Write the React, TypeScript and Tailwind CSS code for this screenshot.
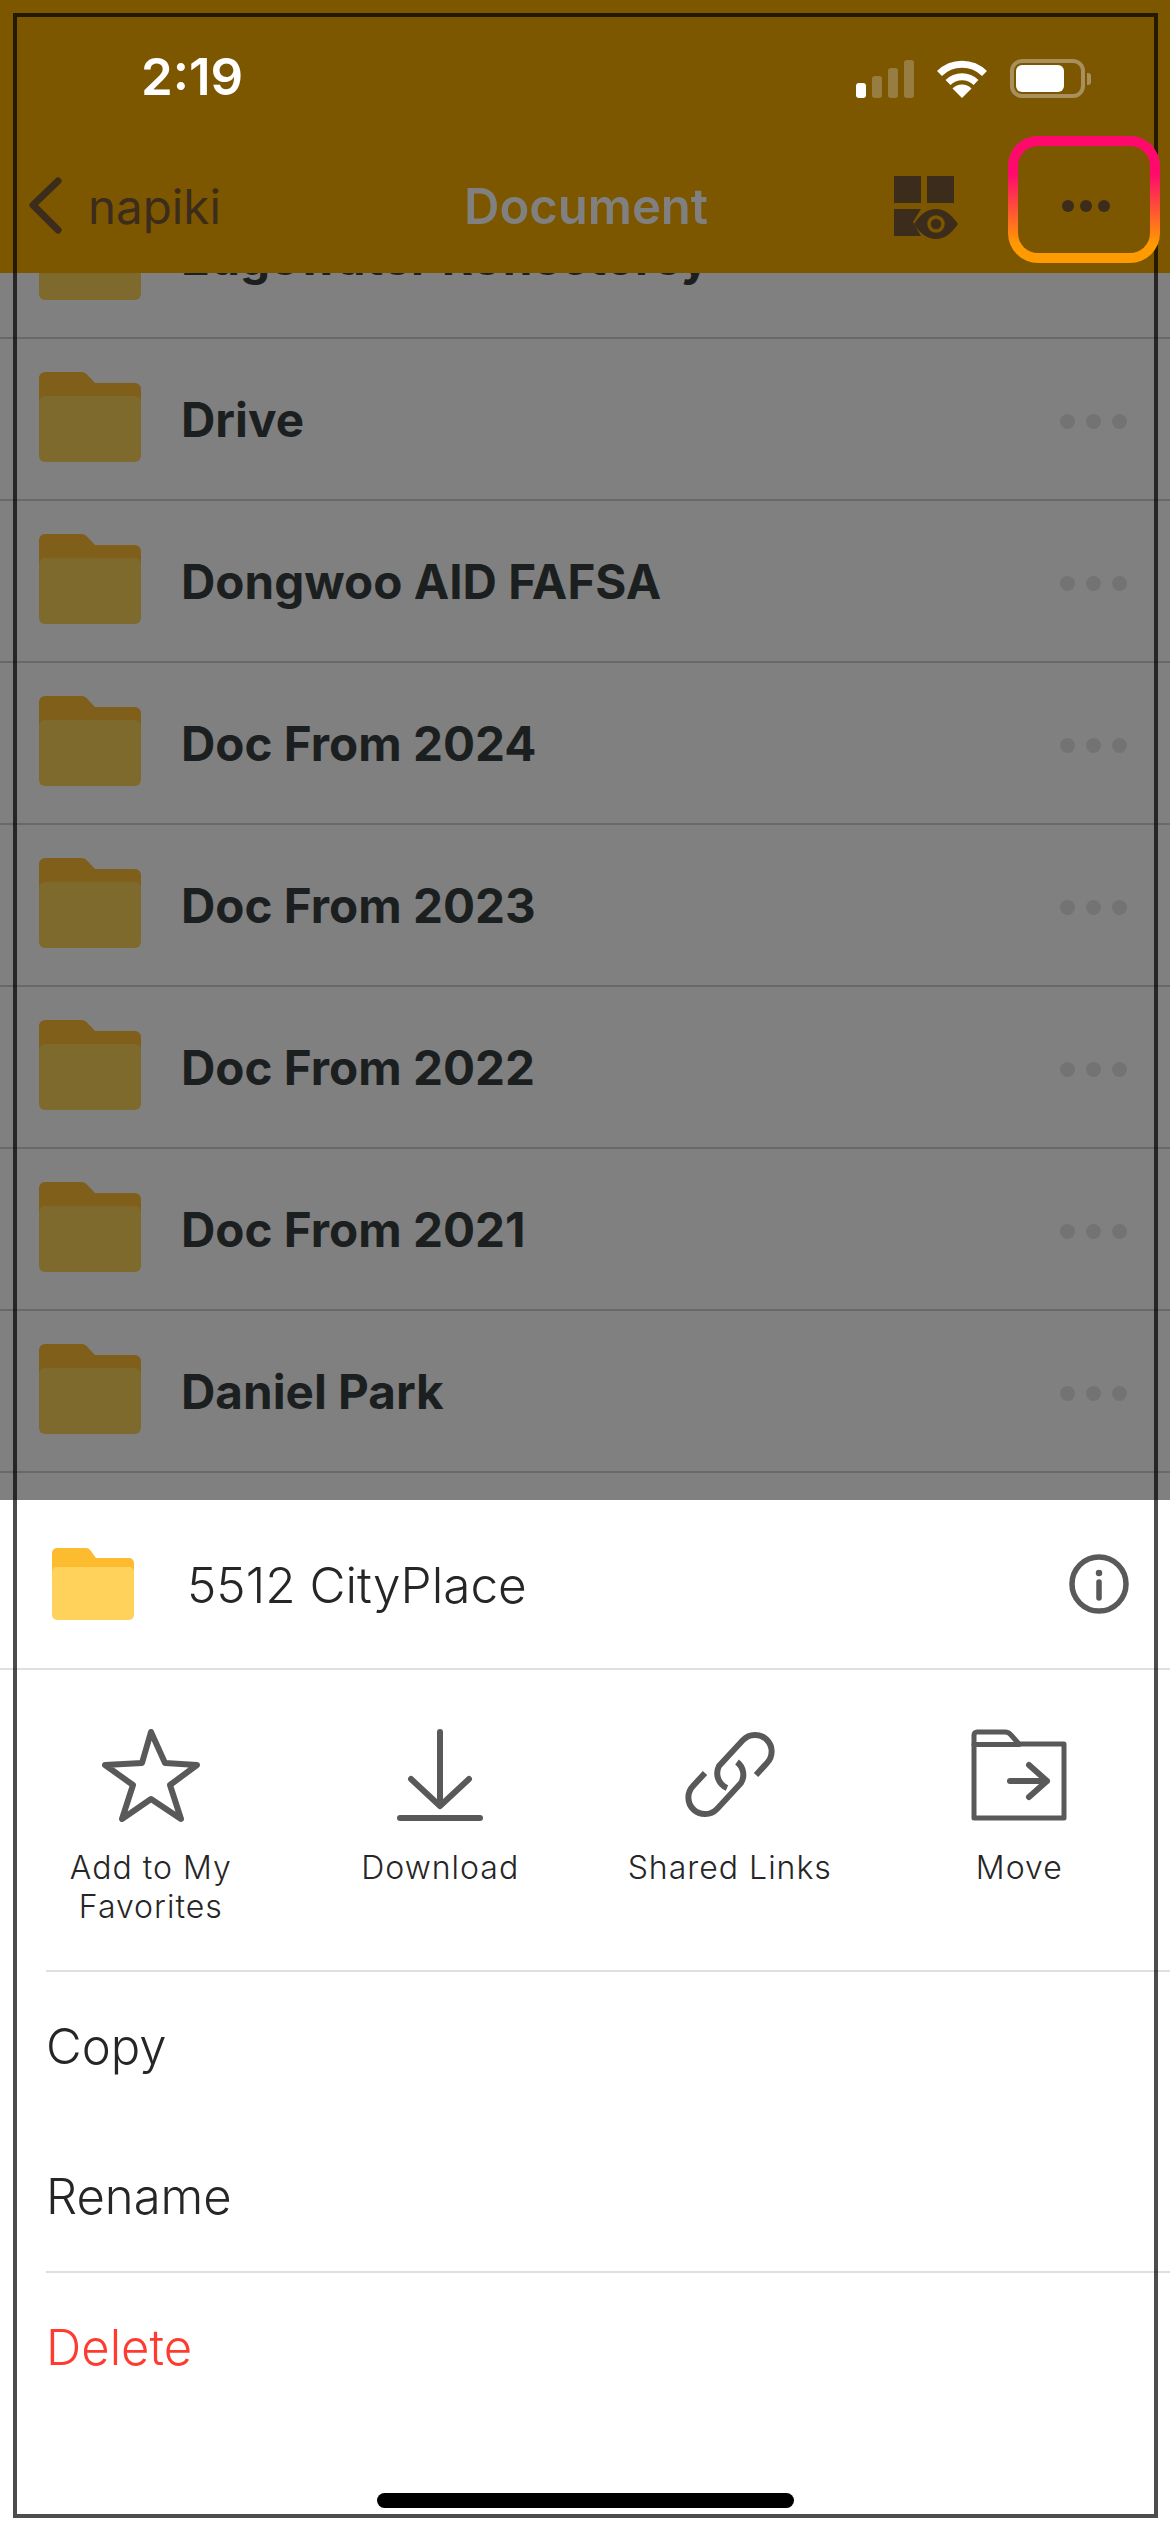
const rows = ["Edgewater Reflectorey", "Drive", "Dongwoo AID FAFSA", "Doc From 2024", "Doc From 2023", "Doc From 2022", "Doc From 2021", "Daniel Park", ""];

function FolderIcon({ back, front, className }: { back: string; front: string; className: string }) {
  return (
    <svg viewBox="0 0 102 90" className={className}>
      <path d="M0 6a6 6 0 0 1 6-6h37a6 6 0 0 1 4.2 1.8L56 11h40a6 6 0 0 1 6 6v30H0z" fill={back} />
      <rect x="0" y="24" width="102" height="66" rx="6" fill={front} />
    </svg>
  );
}

function Row({ name }: { name: string }) {
  return (
    <div className="h-[162px] shrink-0 border-b-[2px] border-[#696969] flex items-center pt-[4px] pl-[39px] pr-[43px]">
      {name && <FolderIcon back="#7f5f1a" front="#7f6a2e" className="w-[102px] h-[90px] shrink-0 -mt-[8px]" />}
      <span className="ml-[40px] flex-1 -mt-[3px] text-[47.6px] font-bold text-[#1c1f20] whitespace-nowrap">{name}</span>
      {name && (
        <div className="flex gap-[11px]">
          <span className="w-[15px] h-[15px] rounded-full bg-[#737373]" />
          <span className="w-[15px] h-[15px] rounded-full bg-[#737373]" />
          <span className="w-[15px] h-[15px] rounded-full bg-[#737373]" />
        </div>
      )}
    </div>
  );
}

function Action({ label, children }: { label: string; children: React.ReactNode }) {
  return (
    <div className="flex flex-col items-center">
      <div className="h-[96px] flex items-center justify-center">{children}</div>
      <div className="mt-[25px] text-[32px] leading-[39px] tracking-[1px] font-[350] text-[#262626] text-center w-[240px]">{label}</div>
    </div>
  );
}

export default function App() {
  return (
    <div className="relative w-[1170px] h-[2532px] overflow-hidden flex flex-col bg-white font-['Inter',sans-serif]">
      <header className="relative z-10 h-[273px] shrink-0 bg-[#7c5700] flex flex-col">
        <div className="h-[156px] flex items-start justify-between pt-[47px] pl-[141px] pr-[79px]">
          <span className="text-[51px] leading-[60px] font-semibold text-white">2:19</span>
          <div className="flex items-center gap-[23px] pt-[12px]">
            <svg width="58" height="38" viewBox="0 0 58 38">
              <rect x="0" y="23" width="10" height="15" rx="3" fill="#fff" />
              <rect x="16" y="16" width="10" height="22" rx="3" fill="#987d43" />
              <rect x="32" y="8" width="10" height="30" rx="3" fill="#987d43" />
              <rect x="48" y="0" width="10" height="38" rx="3" fill="#987d43" />
            </svg>
            <svg width="50" height="38" viewBox="0 0 50 38" fill="none" stroke="#fff" strokeWidth="7">
              <path d="M2.5 13.5a32 32 0 0 1 45 0" />
              <path d="M11 22.5a20 20 0 0 1 28 0" />
              <path d="M25 38l-9.5-9.5a13.5 13.5 0 0 1 19 0z" fill="#fff" stroke="none" />
            </svg>
            <div className="flex items-center gap-[2px]">
              <div className="w-[75px] h-[39px] rounded-[12px] border-[4px] border-[#a98f5c] p-[2px]">
                <div className="w-[48px] h-full rounded-[6px] bg-white" />
              </div>
              <div className="w-[4px] h-[12px] rounded-r-[3px] bg-[#a98f5c]" />
            </div>
          </div>
        </div>
        <div className="flex-1 relative flex items-start">
          <svg width="40" height="64" viewBox="0 0 40 64" className="ml-[25px] mt-[19px] shrink-0" fill="none" stroke="#3c2c1c" strokeWidth="7" strokeLinecap="round" strokeLinejoin="round">
            <path d="M33 6 8 30l25 25" />
          </svg>
          <span className="ml-[23px] mt-[23px] text-[47.5px] leading-[56px] text-[#3c2c1c]">napiki</span>
          <span className="absolute left-[464px] top-[23px] text-[49px] leading-[56px] font-semibold text-[#808080]">Document</span>
          <svg width="64" height="64" viewBox="0 0 64 64" className="absolute left-[894px] top-[20px]">
            <rect x="0" y="0" width="27" height="27" fill="#3c2c1c" />
            <rect x="33" y="0" width="27" height="27" fill="#3c2c1c" />
            <path d="M0 33h27l-8 13 8 14H0z" fill="#3c2c1c" />
            <path d="M20 48c6-10 14-15 22-15s15 5 22 15c-7 10-14 15-22 15s-16-5-22-15z" fill="#3c2c1c" />
            <circle cx="42" cy="48" r="7" fill="none" stroke="#7c5700" strokeWidth="3.5" />
          </svg>
        </div>
      </header>

      <main className="flex-1 min-h-0 overflow-hidden bg-[#808080]">
        <div className="flex flex-col mt-[-96px]">
          {rows.map((r, i) => (
            <Row key={i} name={r} />
          ))}
        </div>
      </main>

      <section className="h-[1032px] shrink-0 bg-white flex flex-col">
        <div className="h-[170px] border-b-[2px] border-[#e0e0e0] flex items-center pl-[52px] pr-[41px]">
          <svg viewBox="0 0 82 72" className="w-[82px] h-[72px] shrink-0">
            <path d="M0 5a5 5 0 0 1 5-5h29a5 5 0 0 1 4 1.8L44 10h33a5 5 0 0 1 5 5v25H0z" fill="#fdbb2f" />
            <rect x="0" y="19" width="82" height="53" rx="5" fill="#ffd35b" />
          </svg>
          <span className="ml-[53px] flex-1 pt-[3px] text-[49.5px] font-[350] text-[#262626]">5512 CityPlace</span>
          <svg width="60" height="60" viewBox="0 0 60 60" fill="none" stroke="#595959" strokeWidth="5.5" strokeLinecap="round">
            <circle cx="30" cy="30" r="27" />
            <path d="M30 28v16" />
            <circle cx="30" cy="19" r="2.5" fill="#595959" strokeWidth="1.5" />
          </svg>
        </div>

        <div className="h-[300px] pt-[57px] px-[6px] grid grid-cols-4 content-start">
          <Action label="Add to My Favorites">
            <svg width="98" height="94" viewBox="0 0 98 94" fill="none" stroke="#595959" strokeWidth="6" strokeLinejoin="round">
              <path d="M49 4l14 31 32 2-27 20 11 34-30-20-29 20 11-34L3 37l37-2z" />
            </svg>
          </Action>
          <Action label="Download">
            <svg width="86" height="92" viewBox="0 0 86 92" fill="none" stroke="#595959" strokeWidth="6" strokeLinecap="round" strokeLinejoin="round">
              <path d="M43 3v72" />
              <path d="M14 50l29 27 29-27" />
              <path d="M3 89h80" />
            </svg>
          </Action>
          <Action label="Shared Links">
            <svg width="90" height="92" viewBox="0 0 90 92" fill="none" stroke="#595959" strokeWidth="6">
              <path d="M20 44 8 57a16 16 0 0 0 24 23l24-26a16 16 0 0 0-4-21" />
              <path d="M71 46 82 34a16 16 0 0 0-24-23L34 37a16 16 0 0 0 8 22" />
            </svg>
          </Action>
          <Action label="Move">
            <svg width="96" height="92" viewBox="0 0 96 92" fill="none" stroke="#595959" strokeWidth="5" strokeLinecap="round" strokeLinejoin="round">
              <path d="M3 15V6a3 3 0 0 1 3-3h28a8 8 0 0 1 6 3l8 9h45v74H3z" />
              <path d="M3 15.500h45" />
              <path d="M39 52h37M58 36l18 16-18 16" strokeWidth="6" />
            </svg>
          </Action>
        </div>

        <div className="ml-[46px] border-t-[2px] border-[#e0e0e0] h-[301px] flex flex-col">
          <div className="h-[150px] flex items-center text-[49px] font-[350] text-[#262626]">Copy</div>
          <div className="h-[150px] flex items-center text-[49px] font-[350] text-[#262626]">Rename</div>
        </div>
        <div className="ml-[46px] border-t-[2px] border-[#e0e0e0] h-[151px] flex items-center text-[49px] font-[350] text-[#ff3b30]">Delete</div>
        <div className="flex-1 flex items-end justify-center pb-[24px]">
          <div className="w-[417px] h-[15px] rounded-full bg-black" />
        </div>
      </section>

      <div className="absolute left-[13px] top-[13px] w-[1145px] h-[2505px] border-[4px] border-black/70 pointer-events-none z-20" />
      <div className="absolute left-[1008px] top-[136px] w-[152px] h-[127px] rounded-[30px] p-[10px] z-30 bg-[linear-gradient(180deg,#ff0a6c_30%,#ff9a00_85%)]">
        <div className="w-full h-full rounded-[20px] bg-[#7c5700] flex items-center justify-center gap-[6px] pt-[13px] pl-[4px]">
          <span className="w-[12px] h-[12px] rounded-full bg-[#3c2c1c]" />
          <span className="w-[12px] h-[12px] rounded-full bg-[#3c2c1c]" />
          <span className="w-[12px] h-[12px] rounded-full bg-[#3c2c1c]" />
        </div>
      </div>
    </div>
  );
}
